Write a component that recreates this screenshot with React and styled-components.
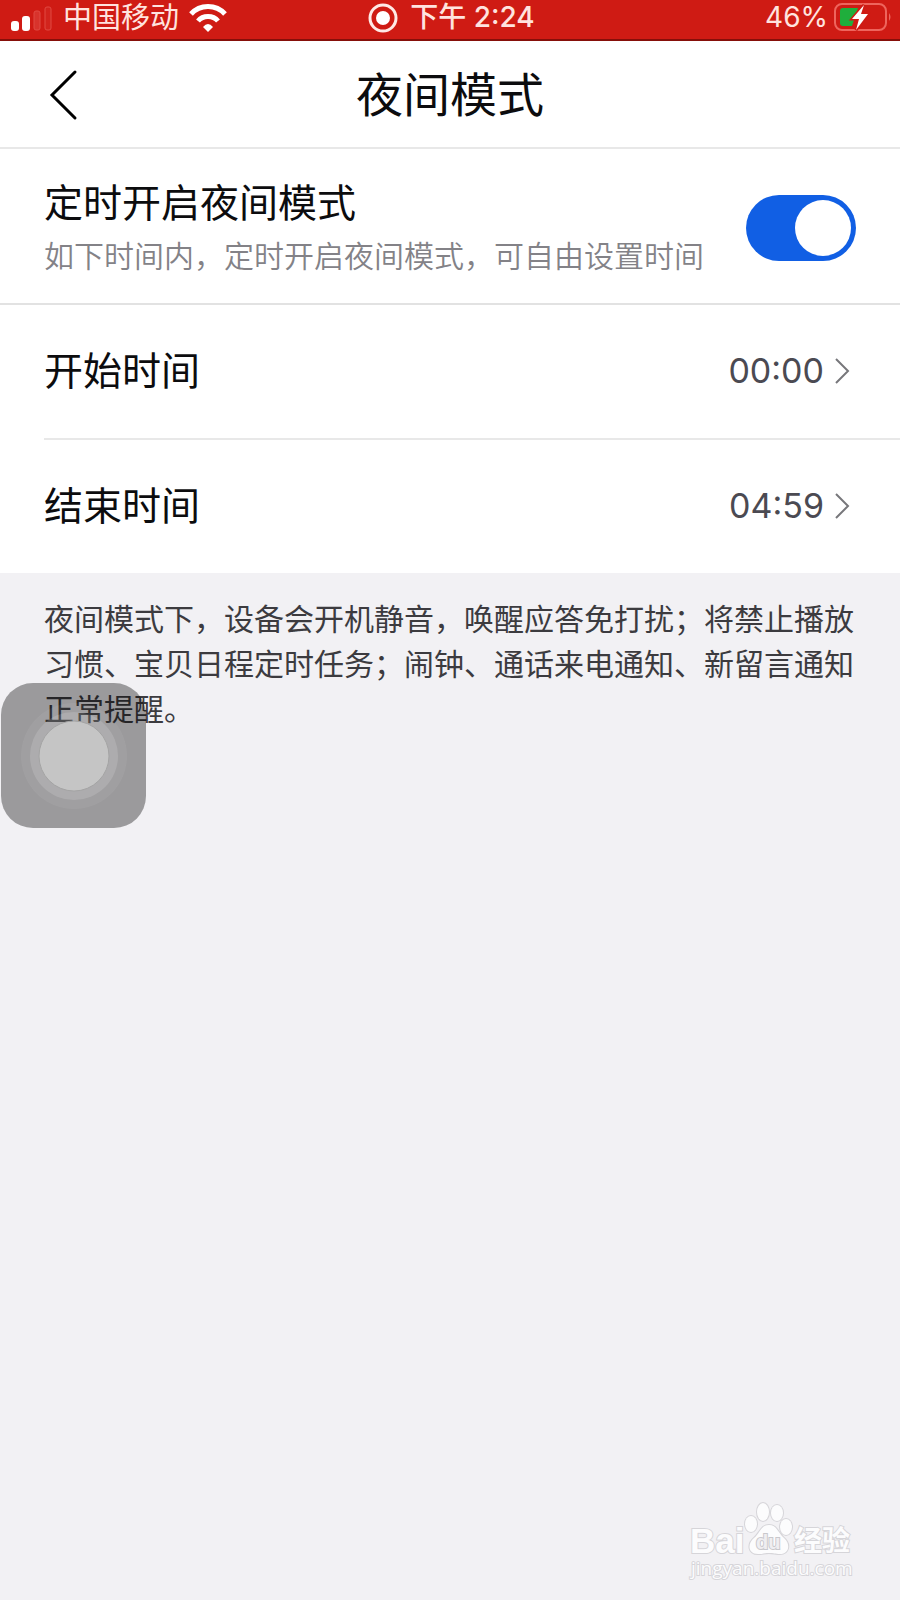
import React, { useState } from "react";
import styled, { createGlobalStyle } from "styled-components";

const times = [
  { id: "start", label: "开始时间", value: "00:00" },
  { id: "end", label: "结束时间", value: "04:59" },
];

const StatusBar = () => {
  return (
    <StatusBarStyle>
      <div className="status__left">
        <svg width="42" height="30" viewBox="0 0 42 30" aria-hidden="true">
          <rect x="0" y="18" width="8" height="10" rx="3" fill="#fff" />
          <rect x="11" y="13" width="8" height="15" rx="3" fill="#fff" />
          <rect x="23" y="8" width="6" height="19" rx="2" fill="#d8332c" stroke="#e04a43" />
          <rect x="34" y="4" width="6" height="23" rx="2" fill="#d2241d" stroke="#e04a43" />
        </svg>
        <span className="status__carrier">中国移动</span>
        <svg width="38" height="28" viewBox="0 0 38 28" fill="none" aria-hidden="true">
          <path d="M2 10 C11 0 27 0 36 10" stroke="#fff" strokeWidth="5" />
          <path d="M9 17 C14 11 24 11 29 17" stroke="#fff" strokeWidth="5" />
          <path d="M14 23 Q19 17 24 23 L19 28 Z" fill="#fff" />
        </svg>
      </div>
      <div className="status__center">
        <svg width="30" height="30" viewBox="0 0 30 30" aria-hidden="true">
          <circle cx="15" cy="15" r="13" fill="none" stroke="#ffe9e6" strokeWidth="3" />
          <circle cx="15" cy="15" r="7" fill="#fff" />
        </svg>
        <span>下午 2:24</span>
      </div>
      <div className="status__right">
        <span>46%</span>
        <svg width="58" height="30" viewBox="0 0 58 30" aria-hidden="true">
          <rect x="1" y="1" width="51" height="26" rx="7" fill="none" stroke="#ee655d" strokeWidth="2" />
          <path d="M55 10 Q58 14 55 18 Z" fill="#ee655d" />
          <path d="M9 5 H24 L18 23 H9 Q6 23 6 20 V8 Q6 5 9 5 Z" fill="#1fae3c" />
          <path
            d="M30 2 L18 16 H25 L22 27 L34 11 H27 Z"
            fill="#fff"
            stroke="#cf1b14"
            strokeWidth="3"
            paintOrder="stroke"
          />
        </svg>
      </div>
    </StatusBarStyle>
  );
};

const Watermark = () => {
  return (
    <WatermarkStyle viewBox="0 0 166 82" role="img" aria-label="Baidu 经验">
      <g fill="#fcfcfd" stroke="#d6d5d9" strokeWidth="2" paintOrder="stroke">
        <text className="latin" x="2" y="53" fontSize="35">
          Bai
        </text>
        <path d="M81 25 C89 25 90 33 96 38 C103 44 101 54 92 54 C87 54 86 53 81 53 C76 53 75 54 70 54 C60 54 59 44 66 38 C72 33 73 25 81 25 Z" />
        <ellipse cx="63" cy="24" rx="6" ry="8" />
        <ellipse cx="75" cy="12" rx="6" ry="9" />
        <ellipse cx="89" cy="13" rx="6" ry="8" />
        <ellipse cx="98" cy="27" rx="6" ry="8" />
        <text className="latin" x="68" y="49" fontSize="20" fill="#efeef1" stroke="#c9c8cc">
          du
        </text>
        <text className="cjk" x="106" y="51" fontSize="28">
          经验
        </text>
        <text className="site" x="3" y="75" fontSize="19">
          jingyan.baidu.com
        </text>
      </g>
    </WatermarkStyle>
  );
};

const App = () => {
  // state switch mode malam
  const [enabled, setEnabled] = useState(true);

  const handleEnabled = (e) => {
    setEnabled(e.target.checked);
  };

  return (
    <Page>
      <GlobalStyle />
      <StatusBar />
      <Header>
        <BackButton type="button" aria-label="返回">
          <svg width="30" height="52" viewBox="0 0 30 52" fill="none">
            <path d="M27 3 L4 26 L27 49" stroke="#000" strokeWidth="3" strokeLinecap="round" />
          </svg>
        </BackButton>
        <h1>夜间模式</h1>
      </Header>
      <main>
        <SwitchRow>
          <label htmlFor="night">
            <Label>定时开启夜间模式</Label>
            <Hint>如下时间内，定时开启夜间模式，可自由设置时间</Hint>
          </label>
          <Switch id="night" type="checkbox" checked={enabled} onChange={handleEnabled} />
        </SwitchRow>
        <List>
          {times.map((time) => (
            <li key={time.id}>
              <TimeButton type="button">
                <Label>{time.label}</Label>
                <Value>{time.value}</Value>
                <svg width="16" height="28" viewBox="0 0 16 28" fill="none" aria-hidden="true">
                  <path d="M2 2 L14 14 L2 26" stroke="#77777b" strokeWidth="2" />
                </svg>
              </TimeButton>
            </li>
          ))}
        </List>
        <Note>
          夜间模式下，设备会开机静音，唤醒应答免打扰；将禁止播放习惯、宝贝日程定时任务；闹钟、通话来电通知、新留言通知正常提醒。
        </Note>
      </main>
      <AssistiveTouch type="button" aria-label="辅助触控">
        <svg width="108" height="108" viewBox="0 0 108 108">
          <circle cx="54" cy="54" r="53" fill="#fff" fillOpacity="0.06" />
          <circle cx="54" cy="54" r="44" fill="#fff" fillOpacity="0.14" />
          <circle cx="54" cy="54" r="35" fill="#c5c5c5" stroke="#a4a4a4" />
        </svg>
      </AssistiveTouch>
      <Watermark />
    </Page>
  );
};

const GlobalStyle = createGlobalStyle`
  * {
    box-sizing: border-box;
  }

  body {
    margin: 0;
    background-color: #f2f1f4;
    font-family: Inter, "Noto Sans CJK SC", sans-serif;
  }

  svg {
    display: block;
    flex-shrink: 0;
  }

  button {
    padding: 0;
    border: none;
    background: none;
    font-family: inherit;
    cursor: pointer;
  }
`;

const Page = styled.div`
  position: relative;
  min-height: 100vh;
`;

const StatusBarStyle = styled.div`
  display: grid;
  grid-template-columns: 1fr auto 1fr;
  align-items: center;
  height: 41px;
  padding: 0 8px 4px 11px;
  border-bottom: 2px solid #860f0a;
  background-color: #cf1b14;
  color: #ffe3df;
  font-size: 28px;
  line-height: 35px;

  .status__left,
  .status__center,
  .status__right {
    display: flex;
    align-items: center;
  }

  .status__left {
    gap: 10px;
  }

  .status__carrier {
    font-size: 29px;
  }

  .status__center {
    gap: 12px;
    font-weight: 500;
  }

  .status__right {
    justify-content: flex-end;
    gap: 6px;
  }
`;

const Header = styled.header`
  display: grid;
  grid-template-columns: 1fr auto 1fr;
  align-items: center;
  height: 108px;
  padding: 2px 48px 0;
  border-bottom: 2px solid #e8e8e8;
  background-color: #fff;

  h1 {
    margin: 0;
    color: #0c0c0e;
    font-size: 47px;
    font-weight: 400;
    line-height: 64px;
  }
`;

const BackButton = styled.button`
  justify-self: start;
`;

const SwitchRow = styled.div`
  display: flex;
  align-items: center;
  justify-content: space-between;
  padding: 26px 44px 22px;
  border-bottom: 2px solid #e2e2e2;
  background-color: #fff;
`;

const Label = styled.span`
  display: block;
  color: #0c0c0e;
  font-size: 39px;
  line-height: 56px;
`;

const Hint = styled.span`
  display: block;
  color: #838287;
  font-size: 30px;
  font-weight: 350;
  line-height: 50px;
`;

const Switch = styled.input`
  display: flex;
  flex-shrink: 0;
  appearance: none;
  width: 110px;
  height: 66px;
  margin: 0;
  padding: 5px;
  border-radius: 33px;
  background-color: ${(props) => (props.checked ? "#115fe4" : "#d8d8dc")};
  justify-content: ${(props) => (props.checked ? "flex-end" : "flex-start")};
  cursor: pointer;

  &::before {
    content: "";
    width: 56px;
    height: 56px;
    border-radius: 50%;
    background-color: #fff;
  }
`;

const List = styled.ul`
  margin: 0;
  padding: 0 0 0 44px;
  background-color: #fff;
  list-style: none;

  li + li {
    border-top: 2px solid #e8e8e8;
  }
`;

const TimeButton = styled.button`
  display: flex;
  align-items: center;
  width: 100%;
  height: 133px;
  padding: 0 50px 2px 0;
  text-align: left;
`;

const Value = styled.span`
  margin-left: auto;
  margin-right: 10px;
  color: #4b4a52;
  font-size: 34px;
  line-height: 56px;
`;

const Note = styled.p`
  margin: 0;
  padding: 24px 44px;
  color: #3c3b3f;
  font-size: 30px;
  line-height: 45px;
`;

const AssistiveTouch = styled.button`
  position: absolute;
  top: 683px;
  left: 1px;
  display: flex;
  align-items: center;
  justify-content: center;
  width: 145px;
  height: 145px;
  border-radius: 32px;
  background-color: rgba(0, 0, 0, 0.36);
`;

const WatermarkStyle = styled.svg`
  position: absolute;
  right: 46px;
  bottom: 18px;
  width: 166px;
  height: 82px;

  .latin {
    font-family: "Liberation Sans", sans-serif;
    font-weight: 700;
  }

  .cjk {
    font-family: "Noto Sans CJK SC", sans-serif;
    font-weight: 700;
  }

  .site {
    font-family: "Open Sans", sans-serif;
  }
`;

export default App;
